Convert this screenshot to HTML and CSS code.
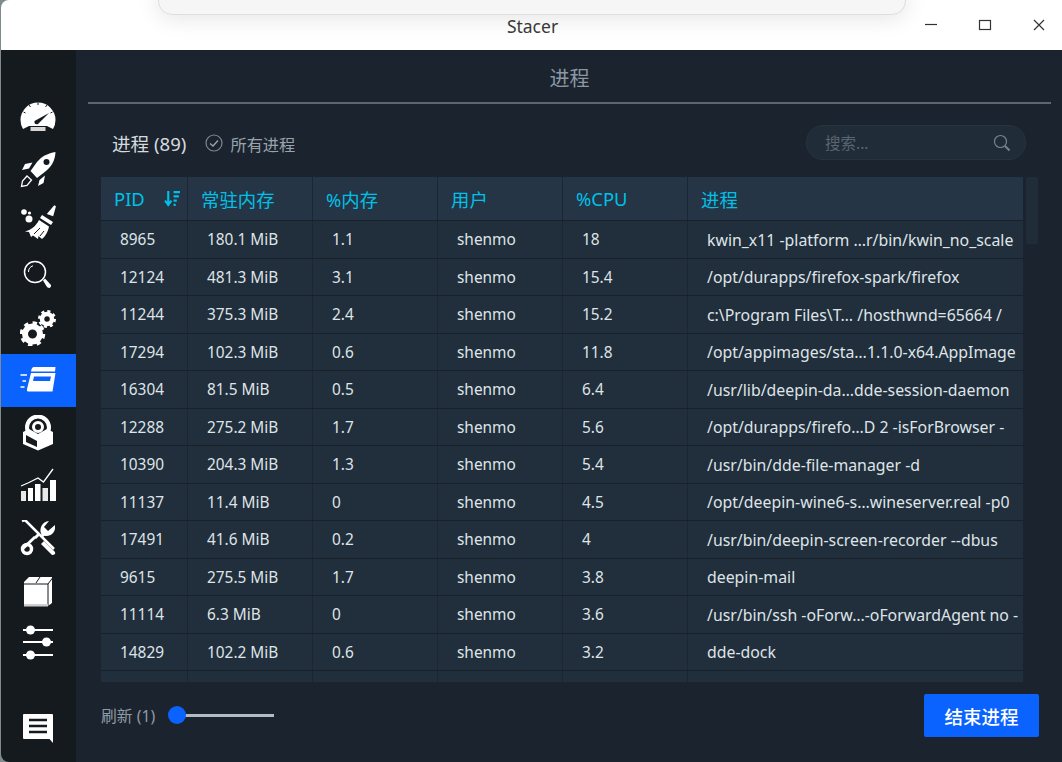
FILE: index.html
```html
<!DOCTYPE html>
<html>
<head>
    <title>Stacer</title>
    <link rel="stylesheet" href="styles.css">
</head>
<body>
    <div class="window">
        <div class="titlebar">
            <div class="popup"></div>
            <span class="title">Stacer</span>
            <div class="controls">
                <svg width="14" height="14" viewBox="0 0 14 14"><path d="M1 6.500H13" stroke="#333" stroke-width="1.200"/></svg>
                <svg width="14" height="14" viewBox="0 0 14 14"><rect x="1.500" y="2.500" width="11" height="9" fill="none" stroke="#333" stroke-width="1.200"/></svg>
                <svg width="14" height="14" viewBox="0 0 14 14"><path d="M2 2L12 12M12 2L2 12" stroke="#333" stroke-width="1.200"/></svg>
            </div>
        </div>
        <div class="app">
            <nav class="sidebar">
                <a class="nav-item">
                    <svg width="36" height="36" viewBox="0 0 36 36">
                        <path d="M3 30Q.5 26 .5 21A17.5 17.5 0 0 1 35.500 21Q35.500 26 33 30L27 27H9Z" fill="#fff"/>
                        <path d="M18 3.500V6M9 6l1.500 2M27 6l-1.500 2M3.500 13l2 1M32.500 13l-2 1" stroke="#151a1e" stroke-width="1"/>
                        <path d="M14.500 22L29 14L18 25Q14 26 14.500 22Z" fill="#151a1e"/>
                        <rect x="10.500" y="28" width="15" height="4" fill="#d6d6d6"/>
                    </svg>
                </a>
                <a class="nav-item">
                    <svg width="36" height="36" viewBox="0 0 36 36">
                        <path d="M35.500 0C28 1.500 22 4 17 10L10.500 19L17 26L26 19C32 14 35 8 35.500 0Z" fill="#fff"/>
                        <circle cx="26.500" cy="10" r="3" fill="#151a1e"/>
                        <path d="M12.500 10.500L5 12L2 18L9 16.500ZM25 23.500L23.500 31L18 34L19.500 28Z" fill="#fff"/>
                        <path d="M7 24L11.500 28L7 33.500L1.500 34.500L2.500 29Z" fill="none" stroke="#fff" stroke-width="1.300"/>
                    </svg>
                </a>
                <a class="nav-item">
                    <svg width="36" height="36" viewBox="0 0 36 36">
                        <circle cx="4" cy="8" r="2.800" fill="#fff"/>
                        <circle cx="9.500" cy="9" r="1.600" fill="#fff"/>
                        <circle cx="9" cy="15" r="3.500" fill="#fff"/>
                        <path d="M35 2L32.500 11L28.500 9.500Z" fill="#fff" stroke="#fff" stroke-width="2"/>
                        <path d="M22 11L33 18L31 21L20 14Z" fill="#fff"/>
                        <path d="M19 16L29 22.500C28 28 25 33 22 35L18.500 32L18 35L13 31.500L11 33L9 28L5 27.500C11 26 16 22 19 16Z" fill="#fff"/>
                        <path d="M20 24L14 30M24 27L20 32" stroke="#151a1e" stroke-width="1"/>
                    </svg>
                </a>
                <a class="nav-item">
                    <svg width="36" height="36" viewBox="0 0 36 36">
                        <circle cx="15" cy="15" r="10.500" fill="none" stroke="#fff" stroke-width="1.500"/>
                        <path d="M8.500 15A6.500 6.500 0 0 1 13 8.800" fill="none" stroke="#fff" stroke-width="1"/>
                        <path d="M23 23.500L25 21.500L31 28Q31.500 30 29.500 31Q28 31 27 30Z" fill="#fff"/>
                    </svg>
                </a>
                <a class="nav-item">
                    <svg width="36" height="36" viewBox="0 0 36 36">
                        <circle cx="12.500" cy="24" r="7.500" fill="none" stroke="#fff" stroke-width="6"/>
                        <circle cx="12.500" cy="24" r="11" fill="none" stroke="#fff" stroke-width="3.500" stroke-dasharray="4.300 4.300"/>
                        <circle cx="27" cy="9" r="5" fill="none" stroke="#fff" stroke-width="4.500"/>
                        <circle cx="27" cy="9" r="7.500" fill="none" stroke="#fff" stroke-width="3" stroke-dasharray="3 2.900"/>
                    </svg>
                </a>
                <a class="nav-item active">
                    <svg width="36" height="36" viewBox="0 0 36 36">
                        <path d="M.5 13H7M2.500 19H6M.5 25H4.500" stroke="#fff" stroke-width="1.300"/>
                        <path d="M11 9.500Q11.500 5 14 5H35.500L35 9.500Z" fill="#fff"/>
                        <path d="M11 11H35.500L32.500 29.500H8Q6.500 29.500 7 27Z" fill="#fff"/>
                        <path d="M14 14.500H31L30 19H13Z" fill="#0a62ff"/>
                    </svg>
                </a>
                <a class="nav-item">
                    <svg width="36" height="36" viewBox="0 0 36 36">
                        <circle cx="18" cy="12.500" r="11" fill="none" stroke="#fff" stroke-width="4"/>
                        <circle cx="18" cy="12" r="4.500" fill="none" stroke="#fff" stroke-width="3"/>
                        <path d="M3 17L9 14L18 19L27 14L33 17V29L18 35.500L3 29Z" fill="#fff"/>
                        <path d="M6 20L17 26V32L6 27Z" fill="#151a1e"/>
                    </svg>
                </a>
                <a class="nav-item">
                    <svg width="36" height="36" viewBox="0 0 36 36">
                        <rect x="1" y="24" width="5" height="10" fill="#e8e8e8"/>
                        <rect x="8" y="21" width="5" height="13" fill="#fff"/>
                        <rect x="15" y="17" width="5.500" height="17" fill="#fff"/>
                        <rect x="22.500" y="21" width="5.500" height="13" fill="#e8e8e8"/>
                        <rect x="30" y="13" width="6" height="21" fill="#fff"/>
                        <path d="M1 19L9 15.500L18 11L23.500 15L33 2" fill="none" stroke="#fff" stroke-width="1.300"/>
                    </svg>
                </a>
                <a class="nav-item">
                    <svg width="36" height="36" viewBox="0 0 36 36">
                        <path d="M2 1L5 0L34 29" stroke="#fff" stroke-width="2.500" fill="none"/>
                        <path d="M24 21L35 32Q36 35 32 35L21 24Z" fill="#fff"/>
                        <path d="M15 17L3.500 28" stroke="#fff" stroke-width="3"/>
                        <circle cx="7" cy="29" r="4.500" fill="none" stroke="#fff" stroke-width="3.500"/>
                        <path d="M19 14L15 18M21 17L26 12" stroke="#fff" stroke-width="3"/>
                        <path d="M35 9A9 9 0 0 1 22 15A9 9 0 0 1 29 1L24 7L28 11L35 5Z" fill="#fff"/>
                    </svg>
                </a>
                <a class="nav-item">
                    <svg width="36" height="36" viewBox="0 0 36 36">
                        <path d="M4 9L9 4H32L32 30L28 33H4Z" fill="#fff"/>
                        <path d="M4 11H28V33M28 11L32.500 5M16 10L20 4" fill="none" stroke="#151a1e" stroke-width="1"/>
                        <rect x="4" y="31" width="24" height="2.500" fill="#cfcfcf"/>
                    </svg>
                </a>
                <a class="nav-item">
                    <svg width="36" height="36" viewBox="0 0 36 36">
                        <path d="M3 5H33M3 17H33M3 30H33" stroke="#fff" stroke-width="2"/>
                        <circle cx="10.500" cy="5" r="4.500" fill="#fff"/>
                        <circle cx="26.500" cy="17" r="4.500" fill="#fff"/>
                        <circle cx="10.500" cy="30" r="4.500" fill="#fff"/>
                    </svg>
                </a>
                <a class="nav-item feedback">
                    <svg width="36" height="36" viewBox="0 0 36 36">
                        <path d="M3 4Q3 3 4 3H32Q33 3 33 4V32L29.500 28H4Q3 28 3 27Z" fill="#fff"/>
                        <path d="M9 9H27M9 15H27M9 21H27" stroke="#151a1e" stroke-width="2.500"/>
                    </svg>
                </a>
            </nav>
            <main class="content">
                <h1 class="page-title">进程</h1>
                <div class="panel">
                    <div class="toolbar">
                        <span class="count">进程 (89)</span>
                        <label class="check">
                            <svg width="18" height="18" viewBox="0 0 18 18">
                                <circle cx="9" cy="9" r="8" fill="none" stroke="#7d8791" stroke-width="1.200"/>
                                <path d="M5 9.500L8 12L13 6.500" fill="none" stroke="#9aa3ab" stroke-width="1.400"/>
                            </svg>
                            <span class="check-label">所有进程</span>
                        </label>
                        <div class="search">
                            <span>搜索...</span>
                            <svg width="18" height="18" viewBox="0 0 18 18">
                                <circle cx="7.500" cy="7.500" r="6" fill="none" stroke="#768290" stroke-width="1.200"/>
                                <path d="M12 12L16.500 16.500" stroke="#768290" stroke-width="2"/>
                            </svg>
                        </div>
                    </div>
                    <div class="table-area">
                        <div class="table">
                            <div class="row head">
                                <div class="cell pid-head">PID
                                    <svg width="17" height="17" viewBox="0 0 16 16">
                                        <path d="M4 1V13M1 10L4 14L7 10" fill="none" stroke="#00c1e8" stroke-width="2"/>
                                        <path d="M9 2H15M9 6H14M9 10H12M9 14H11" stroke="#00c1e8" stroke-width="2"/>
                                    </svg>
                                </div>
                                <div class="cell">常驻内存</div>
                                <div class="cell">%内存</div>
                                <div class="cell">用户</div>
                                <div class="cell">%CPU</div>
                                <div class="cell">进程</div>
                            </div>
                            <div class="row"><div class="cell">8965</div><div class="cell">180.1 MiB</div><div class="cell">1.1</div><div class="cell">shenmo</div><div class="cell">18</div><div class="cell">kwin_x11 -platform …r/bin/kwin_no_scale</div></div>
                            <div class="row"><div class="cell">12124</div><div class="cell">481.3 MiB</div><div class="cell">3.1</div><div class="cell">shenmo</div><div class="cell">15.4</div><div class="cell">/opt/durapps/firefox-spark/firefox</div></div>
                            <div class="row"><div class="cell">11244</div><div class="cell">375.3 MiB</div><div class="cell">2.4</div><div class="cell">shenmo</div><div class="cell">15.2</div><div class="cell">c:\Program Files\T… /hosthwnd=65664 /</div></div>
                            <div class="row"><div class="cell">17294</div><div class="cell">102.3 MiB</div><div class="cell">0.6</div><div class="cell">shenmo</div><div class="cell">11.8</div><div class="cell">/opt/appimages/sta…1.1.0-x64.AppImage</div></div>
                            <div class="row"><div class="cell">16304</div><div class="cell">81.5 MiB</div><div class="cell">0.5</div><div class="cell">shenmo</div><div class="cell">6.4</div><div class="cell">/usr/lib/deepin-da…dde-session-daemon</div></div>
                            <div class="row"><div class="cell">12288</div><div class="cell">275.2 MiB</div><div class="cell">1.7</div><div class="cell">shenmo</div><div class="cell">5.6</div><div class="cell">/opt/durapps/firefo…D 2 -isForBrowser -</div></div>
                            <div class="row"><div class="cell">10390</div><div class="cell">204.3 MiB</div><div class="cell">1.3</div><div class="cell">shenmo</div><div class="cell">5.4</div><div class="cell">/usr/bin/dde-file-manager -d</div></div>
                            <div class="row"><div class="cell">11137</div><div class="cell">11.4 MiB</div><div class="cell">0</div><div class="cell">shenmo</div><div class="cell">4.5</div><div class="cell">/opt/deepin-wine6-s…wineserver.real -p0</div></div>
                            <div class="row"><div class="cell">17491</div><div class="cell">41.6 MiB</div><div class="cell">0.2</div><div class="cell">shenmo</div><div class="cell">4</div><div class="cell">/usr/bin/deepin-screen-recorder --dbus</div></div>
                            <div class="row"><div class="cell">9615</div><div class="cell">275.5 MiB</div><div class="cell">1.7</div><div class="cell">shenmo</div><div class="cell">3.8</div><div class="cell">deepin-mail</div></div>
                            <div class="row"><div class="cell">11114</div><div class="cell">6.3 MiB</div><div class="cell">0</div><div class="cell">shenmo</div><div class="cell">3.6</div><div class="cell">/usr/bin/ssh -oForw…-oForwardAgent no -</div></div>
                            <div class="row"><div class="cell">14829</div><div class="cell">102.2 MiB</div><div class="cell">0.6</div><div class="cell">shenmo</div><div class="cell">3.2</div><div class="cell">dde-dock</div></div>
                            <div class="row"><div class="cell"></div><div class="cell"></div><div class="cell"></div><div class="cell"></div><div class="cell"></div><div class="cell"></div></div>
                        </div>
                        <div class="scrollbar"></div>
                    </div>
                    <div class="footer">
                        <span class="refresh">刷新 (1)</span>
                        <div class="slider"><span class="thumb"></span></div>
                        <button class="end-btn">结束进程</button>
                    </div>
                </div>
            </main>
        </div>
    </div>
</body>
</html>
```

FILE: styles.css
```css
* {
    box-sizing: border-box;
}
html, body {
    margin: 0;
    height: 762px;
    overflow: hidden;
}
body {
    font-family: "Noto Sans", "Noto Sans CJK SC", sans-serif;
    background-color: #7f8a8e;
    padding-left: 1px;
}
.window {
    height: 762px;
    display: flex;
    flex-direction: column;
    border-radius: 8px 0 0 8px;
    overflow: hidden;
}
.titlebar {
    position: relative;
    height: 50px;
    flex: none;
    background-color: white;
    display: flex;
    justify-content: center;
    align-items: center;
}
.popup {
    position: absolute;
    left: 157px;
    top: -20px;
    width: 748px;
    height: 35px;
    background-color: #f6f6f6;
    border: 1px solid #dedede;
    border-radius: 14px;
    box-shadow: 0px 4px 22px rgba(0,0,0,0.1);
}
.title {
    font-size: 17.5px;
    color: #3a3a3a;
    margin: 1px 0 0 2px;
}
.controls {
    position: absolute;
    right: 16px;
    top: 18px;
    display: flex;
    gap: 40px;
}
.app {
    flex: 1;
    display: flex;
    min-height: 0;
}
.sidebar {
    width: 75px;
    flex: none;
    background-color: #151a1e;
    display: flex;
    flex-direction: column;
    padding-top: 41px;
}
.nav-item {
    height: 52.6px;
    flex: none;
    display: flex;
    align-items: center;
    justify-content: center;
    padding-right: 2px;
}
.nav-item.active {
    background-color: #0a62ff;
}
.nav-item.feedback {
    margin-top: auto;
    margin-bottom: 7px;
}
.content {
    flex: 1;
    min-width: 0;
    background-color: #1b242e;
    display: flex;
    flex-direction: column;
}
.page-title {
    height: 54px;
    margin: 0 11px 0 12px;
    border-bottom: 2px solid #5b6673;
    font-size: 20px;
    font-weight: normal;
    color: #8c97a4;
    text-align: center;
    line-height: 58px;
}
.panel {
    flex: 1;
    padding: 21px 23px 0 25px;
    display: flex;
    flex-direction: column;
    min-height: 0;
}
.toolbar {
    height: 35px;
    flex: none;
    display: flex;
    align-items: center;
    padding: 0 13px 0 11px;
}
.count {
    font-size: 18.6px;
    color: #d5dade;
}
.check {
    margin-left: 19px;
    display: flex;
    align-items: center;
    gap: 7px;
    font-size: 16.2px;
    color: #9aa3ab;
}
.check-label {
    padding-top: 2px;
}
.search {
    margin-left: auto;
    width: 220px;
    height: 35px;
    display: flex;
    align-items: center;
    justify-content: space-between;
    padding: 0 14px 0 18px;
    font-size: 15.5px;
    color: #596573;
    background-color: #202c38;
    border: 1px solid #27333f;
    border-radius: 17px;
}
.table-area {
    margin-top: 17px;
    height: 505px;
    flex: none;
    display: flex;
    gap: 3px;
}
.table {
    width: 922px;
    flex: none;
    overflow: hidden;
}
.row {
    display: grid;
    grid-template-columns: 87px 125px 125px 125px 125px 1fr;
    height: 37.5px;
    border-bottom: 1px solid #18202a;
    background-color: #212e3b;
    color: #dfe4e8;
    font-size: 15.4px;
}
.cell {
    padding: 1px 0 0 19px;
    border-right: 1px solid #1b2631;
    display: flex;
    align-items: center;
    white-space: nowrap;
    overflow: hidden;
}
.cell:last-child {
    font-size: 15.85px;
    border-right: none;
}
.row.head {
    height: 44px;
    background-color: #253545;
    color: #00c1e8;
}
.row.head .cell {
    padding: 0 0 0 13px;
    font-size: 18.4px;
}
.row.head .pid-head {
    justify-content: space-between;
    padding-right: 6px;
}
.scrollbar {
    width: 12px;
    height: 67px;
    background-color: #202c38;
    border-radius: 2px;
}
.footer {
    margin-top: 12px;
    display: flex;
    align-items: center;
}
.refresh {
    font-size: 15.8px;
    color: #8f9aa7;
}
.slider {
    position: relative;
    width: 97px;
    height: 3px;
    margin-left: 22px;
    background-color: #b4bac6;
}
.thumb {
    position: absolute;
    left: -9px;
    top: -8px;
    width: 18px;
    height: 18px;
    border-radius: 50%;
    background-color: #0a62ff;
}
.end-btn {
    margin-left: auto;
    width: 115px;
    height: 43px;
    border: none;
    border-radius: 2px;
    background-color: #0a62ff;
    color: white;
    font-family: inherit;
    font-size: 18.5px;
    font-weight: 500;
    cursor: pointer;
}
```
